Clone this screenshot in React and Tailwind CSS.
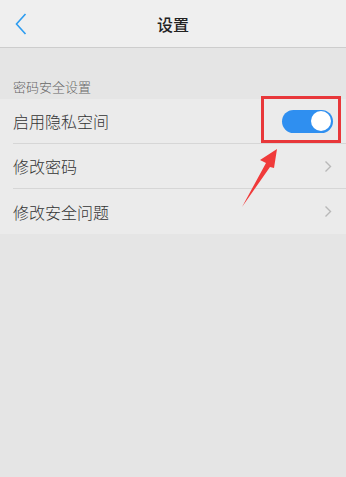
const font = { fontFamily: '"Noto Sans CJK SC", "Noto Sans", sans-serif' };

const Chevron = () => (
  <svg width="8" height="13" viewBox="0 0 8 13" className="text-[#b8b8b8]">
    <path d="M1.5 1.5 L6.5 6.5 L1.5 11.5" fill="none" stroke="currentColor" strokeWidth="1.4" />
  </svg>
);

const Row = ({ label, children, last }) => (
  <div className="flex h-[45px] items-center pl-[13px]">
    <div className={`flex h-full flex-1 items-center pr-[14px] ${last ? "" : "border-b border-[#d6d6d6]"}`}>
      <span className="flex-1 text-[16px] font-light text-[#333]">{label}</span>
      {children}
    </div>
  </div>
);

export default function App() {
  return (
    <div style={font} className="relative h-[477px] w-[346px] overflow-hidden bg-[#e5e5e5]">
      <header className="relative flex h-[48px] items-center justify-center border-b border-[#cdcdcd] bg-[#efefef]">
        <svg width="14" height="24" viewBox="0 0 14 24" className="absolute left-[14px] top-[12px]">
          <path d="M11.5 2 L2.5 12 L11.5 22" fill="none" stroke="#2d9cf0" strokeWidth="1.6" />
        </svg>
        <h1 className="text-[16px] font-medium text-[#222]">设置</h1>
      </header>

      <div className="flex h-[51px] items-end pb-[3px] pl-[13px] text-[13px] font-light text-[#666]">密码安全设置</div>

      <div className="bg-[#ebebeb]">
        <Row label="启用隐私空间">
          <div className="mr-[-1px] flex h-[23px] w-[51px] items-center justify-end rounded-full bg-[#2f8ff0] pr-[2px]">
            <div className="h-[20px] w-[20px] rounded-full bg-white" />
          </div>
        </Row>
        <Row label="修改密码">
          <Chevron />
        </Row>
        <Row label="修改安全问题" last>
          <Chevron />
        </Row>
      </div>

      <div className="pointer-events-none absolute left-[261px] top-[96px] h-[47px] w-[80px] border-[3px] border-[#e8373a]" />
      <svg className="pointer-events-none absolute left-0 top-0" width="346" height="477">
        <polygon points="277,149 260,160 266,163 242,207 270,167 274,168" fill="#f03a3a" />
      </svg>
    </div>
  );
}
